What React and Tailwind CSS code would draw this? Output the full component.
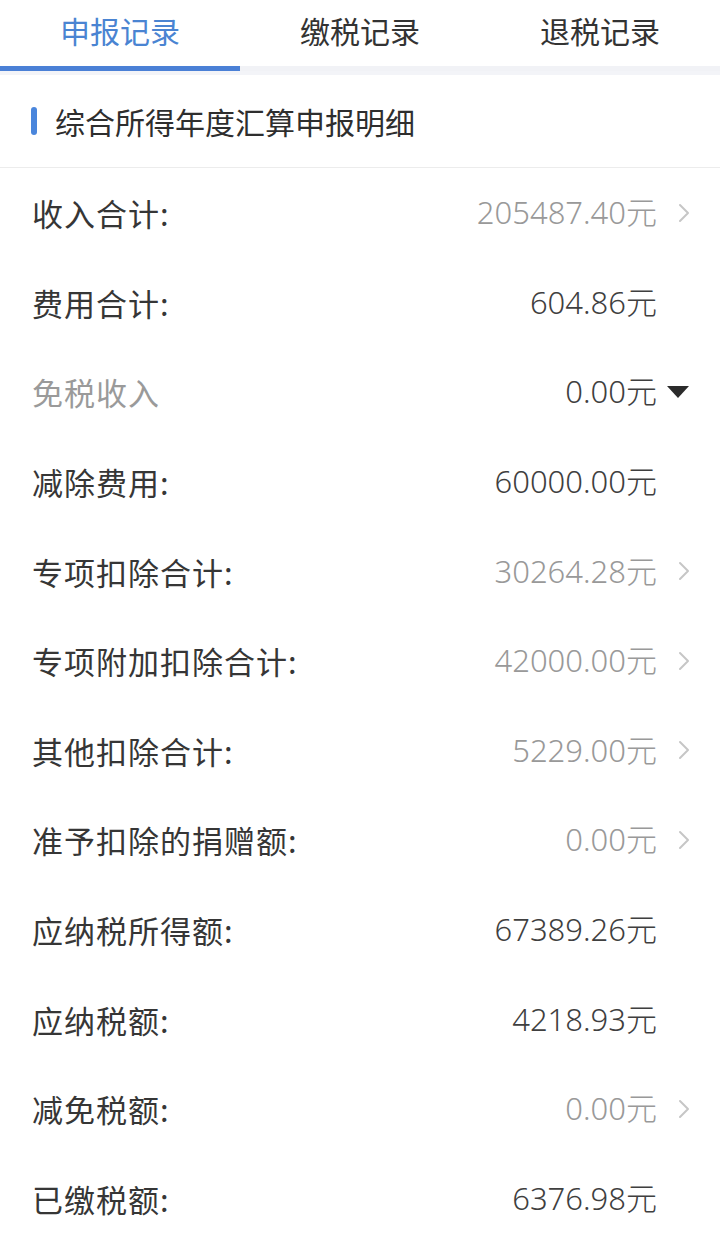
import React from "react";

const CJK = { fontFamily: '"Noto Sans CJK SC", "Noto Sans", sans-serif' };
const NUM = { fontFamily: '"Noto Sans", "Noto Sans CJK SC", sans-serif' };

const rows = [
  { label: "收入合计:", value: "205487.40元", gray: true, icon: "chev" },
  { label: "费用合计:", value: "604.86元" },
  { label: "免税收入", value: "0.00元", labelGray: true, icon: "tri" },
  { label: "减除费用:", value: "60000.00元" },
  { label: "专项扣除合计:", value: "30264.28元", gray: true, icon: "chev" },
  { label: "专项附加扣除合计:", value: "42000.00元", gray: true, icon: "chev" },
  { label: "其他扣除合计:", value: "5229.00元", gray: true, icon: "chev" },
  { label: "准予扣除的捐赠额:", value: "0.00元", gray: true, icon: "chev" },
  { label: "应纳税所得额:", value: "67389.26元" },
  { label: "应纳税额:", value: "4218.93元" },
  { label: "减免税额:", value: "0.00元", gray: true, icon: "chev" },
  { label: "已缴税额:", value: "6376.98元" },
];

function Chevron() {
  return (
    <svg width="14" height="20" viewBox="0 0 14 20" className="block">
      <path d="M3 2 L11 10 L3 18" fill="none" stroke="#c6c6c6" strokeWidth="2" strokeLinecap="round" strokeLinejoin="round" />
    </svg>
  );
}

function Triangle() {
  return (
    <svg width="24" height="14" viewBox="0 0 24 14" className="block">
      <path d="M1 1 L23 1 L12 13 Z" fill="#2b2b2b" />
    </svg>
  );
}

export default function App() {
  return (
    <div className="w-[720px] h-[1238px] overflow-hidden bg-white" style={CJK}>
      {/* Tabs */}
      <div className="flex">
        {["申报记录", "缴税记录", "退税记录"].map((t, i) => (
          <div key={t} className="flex-1 flex flex-col">
            <div
              className={
                "h-[66px] pb-[6px] flex items-center justify-center text-[30px] leading-none " +
                (i === 0 ? "text-[#4a84d2]" : "text-[#333333]")
              }
            >
              {t}
            </div>
            <div className={"h-[5px] " + (i === 0 ? "bg-[#4a80d6]" : "bg-[#f1f2f6]")} />
          </div>
        ))}
      </div>
      <div className="h-[4px] bg-[#f3f4f8]" />

      {/* Section title */}
      <div className="h-[93px] flex items-center pl-[31px] border-b border-[#ececec]">
        <div className="w-[6px] h-[28px] rounded-full bg-[#4a86dc]" />
        <div className="ml-[18px] text-[30px] leading-none text-[#2e2e2e]">综合所得年度汇算申报明细</div>
      </div>

      {/* Rows */}
      {rows.map((r) => (
        <div key={r.label} className="h-[89.6px] flex items-center pl-[32px] pr-[30px]">
          <div
            className={
              "text-[31px] tracking-[1px] leading-none " +
              (r.labelGray ? "text-[#9a9a9a]" : "text-[#363636]")
            }
          >
            {r.label}
          </div>
          <div className="flex-1" />
          <div
            className={"text-[31px] font-light leading-none " + (r.gray ? "text-[#999999]" : "text-[#3f3f3f]")}
            style={NUM}
          >
            {r.value}
          </div>
          <div className="w-[33px] flex items-center justify-end">
            {r.icon === "chev" && <div className="mr-[-1px]"><Chevron /></div>}
            {r.icon === "tri" && <Triangle />}
          </div>
        </div>
      ))}
    </div>
  );
}
